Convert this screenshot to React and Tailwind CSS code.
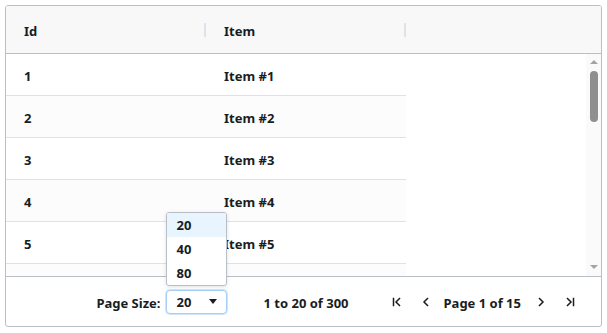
import React from "react";

function Icon({ kind }) {
  return (
    <svg width="16" height="16" viewBox="0 0 16 16" fill="none" stroke="#181d1f" strokeWidth="1.5" strokeLinecap="square" strokeLinejoin="miter">
      {kind === "first" && (
        <>
          <line x1="4.5" y1="4.5" x2="4.5" y2="11.5" />
          <polyline points="10.5,4.5 7,8 10.5,11.5" />
        </>
      )}
      {kind === "prev" && <polyline points="9.5,4.5 6,8 9.5,11.5" />}
      {kind === "next" && <polyline points="6.5,4.5 10,8 6.5,11.5" />}
      {kind === "last" && (
        <>
          <polyline points="5.5,4.5 9,8 5.5,11.5" />
          <line x1="11.5" y1="4.5" x2="11.5" y2="11.5" />
        </>
      )}
    </svg>
  );
}

export default function App() {
  const rows = [1, 2, 3, 4, 5, 6];
  return (
    <div className="bg-white pt-[5px] pl-[5px] font-['Noto_Sans',sans-serif] text-[13px] font-bold text-[#181d1f]">
      <div className="w-[597px] h-[322px] border border-[#babfc7] rounded-[3px] flex flex-col overflow-hidden">
        {/* header */}
        <div className="h-[48px] shrink-0 bg-[#f8f8f8] border-b border-[#babfc7] flex items-center">
          <div className="w-[200px] flex items-center pl-[18px]">
            <span className="flex-1 pt-[4px]">Id</span>
            <div className="w-[2px] h-[14px] bg-[#dde2eb]" />
          </div>
          <div className="w-[200px] flex items-center pl-[18px]">
            <span className="flex-1 pt-[4px]">Item</span>
            <div className="w-[2px] h-[14px] bg-[#dde2eb]" />
          </div>
        </div>
        {/* body */}
        <div className="h-[223px] shrink-0 flex border-b border-[#babfc7]">
          <div className="flex-1 overflow-hidden">
            {rows.map((r, i) => (
              <div
                key={r}
                className={`w-[400px] h-[42px] shrink-0 border-b border-[#dde2eb] flex items-center pt-[4px] ${i % 2 === 1 ? "bg-[#fcfcfc]" : "bg-white"}`}
              >
                {r < 6 && (
                  <>
                    <div className="w-[200px] pl-[18px]">{r}</div>
                    <div className="w-[200px] pl-[18px]">Item #{r}</div>
                  </>
                )}
              </div>
            ))}
          </div>
          <div className="w-[15px] bg-[#fafafa] flex flex-col items-center">
            <div className="mt-[6px] w-0 h-0 border-l-[4px] border-r-[4px] border-b-[4px] border-l-transparent border-r-transparent border-b-[#a3a3a3]" />
            <div className="mt-[7px] w-[8px] h-[51px] rounded-full bg-[#8f8f8f]" />
            <div className="flex-1" />
            <div className="mb-[7px] w-0 h-0 border-l-[4px] border-r-[4px] border-t-[4px] border-l-transparent border-r-transparent border-t-[#a3a3a3]" />
          </div>
        </div>
        {/* footer */}
        <div className="flex-1 flex items-center justify-end pr-[23px]">
          <span className="pt-[4px]">Page Size:</span>
          <div className="relative ml-[6px]">
            <div className="absolute left-0 bottom-[calc(100%+4px)] w-[61px] bg-white border border-[#babfc7] rounded-[3px] shadow-[0_1px_4px_rgba(0,0,0,0.12)] overflow-hidden">
              <div className="h-[24px] flex items-center pl-[9px] pt-[3px] bg-[#e8f4fe]">20</div>
              <div className="h-[24px] flex items-center pl-[9px] pt-[3px]">40</div>
              <div className="h-[24px] flex items-center pl-[9px] pt-[3px]">80</div>
            </div>
            <div className="w-[61px] h-[24px] bg-white border border-[#a4d0f8] rounded-[4px] shadow-[0_0_0_1px_#cfe7fc] flex items-center justify-between pl-[9px] pr-[9px]">
              <span className="pt-[3px]">20</span>
              <div className="w-0 h-0 border-l-[4px] border-r-[4px] border-t-[5px] border-l-transparent border-r-transparent border-t-[#181d1f]" />
            </div>
          </div>
          <span className="ml-[36px] pt-[4px]">1 to 20 of 300</span>
          <div className="ml-[40px] flex items-center">
            <Icon kind="first" />
          </div>
          <div className="ml-[13px] flex items-center">
            <Icon kind="prev" />
          </div>
          <span className="ml-[10px] pt-[4px]">Page 1 of 15</span>
          <div className="ml-[12px] flex items-center">
            <Icon kind="next" />
          </div>
          <div className="ml-[13px] flex items-center">
            <Icon kind="last" />
          </div>
        </div>
      </div>
    </div>
  );
}
